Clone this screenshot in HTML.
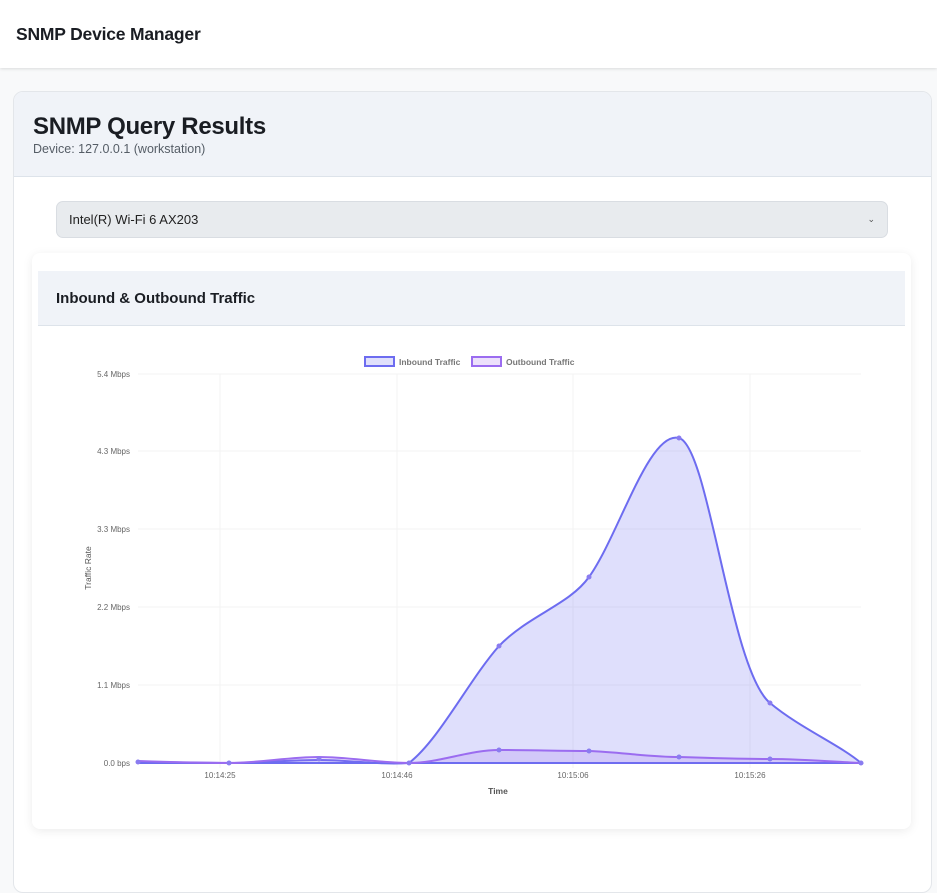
<!DOCTYPE html>
<html><head><style>
body{margin:0;background:#f8f9fa;font-family:"Liberation Sans",sans-serif;width:937px;height:857px;overflow:hidden;position:relative}
.top{position:absolute;left:0;top:0;width:937px;height:68px;background:#fff;box-shadow:0 1px 3px rgba(0,0,0,.12)}
.top h1{position:absolute;left:16px;top:24px;margin:0;font-size:17.5px;font-weight:bold;color:#1a1d23;letter-spacing:-.2px}
.outer{position:absolute;left:13px;top:91px;width:917px;height:800px;background:#fff;border:1px solid #e3e6ea;border-radius:10px;overflow:hidden}
.oh{height:84px;background:#f0f3f8;border-bottom:1px solid #dde3ea;position:relative}
.oh h2{position:absolute;left:19px;top:21px;margin:0;font-size:24px;font-weight:bold;color:#1a1d23;letter-spacing:-.3px}
.oh p{position:absolute;left:19px;top:50px;margin:0;font-size:12.5px;color:#555d66}
.sel{position:absolute;left:42px;top:109px;width:830px;height:35px;background:#e8ebee;border:1px solid #d9dde2;border-radius:7px;font-size:13px;color:#222;line-height:35px;text-indent:12px}
.sel span{position:absolute;right:12px;top:0;font-size:9px;color:#555}
.card{position:absolute;left:18px;top:161px;width:879px;height:576px;background:#fff;border-radius:8px;box-shadow:0 2px 10px rgba(0,0,0,.08)}
.ch{position:absolute;left:6px;top:18px;width:867px;height:54px;background:#f0f3f8;border-bottom:1px solid #dde3ea}
.ch h3{margin:0;position:absolute;left:18px;top:19px;font-size:15px;font-weight:bold;color:#1a1d23}
</style></head><body>
<div class="top"><h1>SNMP Device Manager</h1></div>
<div class="outer">
<div class="oh"><h2>SNMP Query Results</h2><p>Device: 127.0.0.1 (workstation)</p></div>
<div class="sel">Intel(R) Wi-Fi 6 AX203<span>⌄</span></div>
<div class="card"><div class="ch"><h3>Inbound &amp; Outbound Traffic</h3></div></div>
</div>
<svg style="position:absolute;left:0;top:0" width="937" height="857" font-family="Liberation Sans,sans-serif">
<g stroke="#f3f3f3" stroke-width="1">
<line x1="138" y1="374" x2="861" y2="374"/><line x1="138" y1="451" x2="861" y2="451"/><line x1="138" y1="529" x2="861" y2="529"/><line x1="138" y1="607" x2="861" y2="607"/><line x1="138" y1="685" x2="861" y2="685"/><line x1="138" y1="763" x2="861" y2="763"/>
<line x1="220" y1="374" x2="220" y2="768"/><line x1="397" y1="374" x2="397" y2="768"/><line x1="573" y1="374" x2="573" y2="768"/><line x1="750" y1="374" x2="750" y2="768"/>
</g>
<g font-size="8" fill="#666" text-anchor="end">
<text x="130" y="377">5.4 Mbps</text><text x="130" y="454">4.3 Mbps</text><text x="130" y="532">3.3 Mbps</text><text x="130" y="610">2.2 Mbps</text><text x="130" y="688">1.1 Mbps</text><text x="130" y="766">0.0 bps</text>
</g>
<g font-size="8" fill="#666" text-anchor="middle">
<text x="220" y="778">10:14:25</text><text x="397" y="778">10:14:46</text><text x="573" y="778">10:15:06</text><text x="750" y="778">10:15:26</text>
</g>
<text x="498" y="794" font-size="8.5" font-weight="bold" fill="#555" text-anchor="middle">Time</text>
<text transform="translate(91,568) rotate(-90)" font-size="8.5" fill="#555" text-anchor="middle">Traffic Rate</text>
<rect x="365" y="357" width="29" height="9" fill="#e0e0fb" stroke="#6d6cf0" stroke-width="2"/>
<text x="399" y="365" font-size="8.5" font-weight="bold" fill="#777">Inbound Traffic</text>
<rect x="472" y="357" width="29" height="9" fill="#ece0fb" stroke="#9b6cf0" stroke-width="2"/>
<text x="506" y="365" font-size="8.5" font-weight="bold" fill="#777">Outbound Traffic</text>
<path d="M138,762 C168,762 199,763 229,763 C259,763 289,760 319,760 C349,760 379,765 409,763 C439,740 469,680 499,646 C529,615 569,605 589,577 C619,535 649,430 679,438 C709,446 730,670 770,703 C800,728 840,745 861,763 L138,763Z" fill="#6d6cf0" fill-opacity=".22" stroke="#6d6cf0" stroke-width="2"/>
<path d="M138,761 C168,762 199,763 229,763 C259,763 289,757 319,757 C349,757 379,763 409,763 C439,763 469,750 499,750 C529,750 559,751 589,751 C619,752 649,757 679,757 C709,758 739,759 770,759 C800,759 840,762 861,763" fill="#a06cf0" fill-opacity=".2" stroke="#9b6cf0" stroke-width="2"/>
<g fill="#8a7cf0">
<circle cx="138" cy="762" r="2.5"/><circle cx="229" cy="763" r="2.5"/><circle cx="319" cy="759" r="2.5"/><circle cx="409" cy="763" r="2.5"/><circle cx="499" cy="646" r="2.5"/><circle cx="589" cy="577" r="2.5"/><circle cx="679" cy="438" r="2.5"/><circle cx="770" cy="703" r="2.5"/><circle cx="861" cy="763" r="2.5"/>
<circle cx="499" cy="750" r="2.5"/><circle cx="589" cy="751" r="2.5"/><circle cx="679" cy="757" r="2.5"/><circle cx="770" cy="759" r="2.5"/>
</g>
</svg>
</body></html>
